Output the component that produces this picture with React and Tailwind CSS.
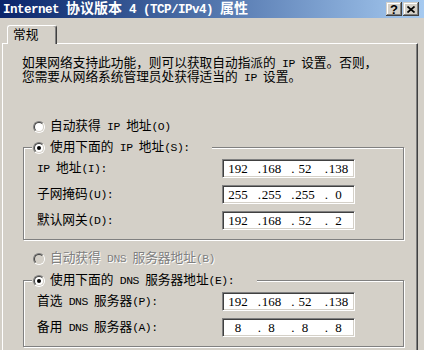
import React from 'react';

const FONT = "font-['Liberation_Serif','Noto_Sans_CJK_SC',serif]";

// Latin runs use a mono face squeezed to half a CJK cell per char, the way SimSun sets them
const T = ({ children }) =>
  String(children)
    .split(/([\x20-\x7e]+)/)
    .filter(Boolean)
    .map((run, i) =>
      /^[\x20-\x7e]+$/.test(run) ? (
        <span
          key={i}
          className="font-['Liberation_Mono','Noto_Sans_CJK_SC',monospace] text-[0.9em] tracking-[-0.0444em] whitespace-pre"
        >
          {run}
        </span>
      ) : (
        <span key={i}>{run}</span>
      )
    );

const Radio = ({ checked, disabled }) => (
  <span className="flex h-[12px] w-[12px] shrink-0 rounded-full border border-t-[#808080] border-l-[#808080] border-r-white border-b-white">
    <span
      className={`flex h-full w-full items-center justify-center rounded-full border border-t-[#404040] border-l-[#404040] border-r-[#d4d0c8] border-b-[#d4d0c8] ${
        disabled ? 'bg-[#d4d0c8]' : 'bg-white'
      }`}
    >
      {checked && <span className="h-[4px] w-[4px] rounded-full bg-black" />}
    </span>
  </span>
);

const IpBox = ({ value }) => {
  const [first, ...rest] = value;
  return (
    <div className="flex h-[19px] w-[133px] items-center border border-t-[#808080] border-l-[#808080] border-r-white border-b-white bg-white pl-[4.5px] text-[13px] leading-none shadow-[inset_1px_1px_0_#404040,inset_-1px_-1px_0_#d4d0c8]">
      <span className="w-[21px] text-center">{first}</span>
      {rest.map((part, i) => (
        <React.Fragment key={i}>
          <span className="w-[12.5px] text-right">.</span>
          <span className="w-[21px] text-center">{part}</span>
        </React.Fragment>
      ))}
    </div>
  );
};

const Group = ({ legendClass, label, rows }) => (
  <div className="mr-[13px] ml-[20px] border border-[#808080] shadow-[inset_1px_1px_0_#fff,1px_1px_0_#fff]">
    <div className={`-mt-[8px] ml-[8px] flex h-[16px] items-center gap-[5px] bg-[#d4d0c8] pl-[1px] ${legendClass}`}>
      <Radio checked />
      <span className="whitespace-nowrap">
        <T>{label}</T>
      </span>
    </div>
    <div className="mt-[3px] flex flex-col gap-[7px] pb-[9px]">
      {rows.map((row) => (
        <div key={row.label} className="flex h-[19px] items-center">
          <span className="w-[198px] pl-[13px] whitespace-nowrap">
            <T>{row.label}</T>
          </span>
          <IpBox value={row.value} />
        </div>
      ))}
    </div>
  </div>
);

const TitleButton = ({ children }) => (
  <div className="flex h-[14px] w-[16px] items-center justify-center bg-[#d4d0c8] shadow-[inset_-1px_-1px_0_#404040,inset_1px_1px_0_#d4d0c8,inset_-2px_-2px_0_#808080,inset_2px_2px_0_#fff]">
    {children}
  </div>
);

export default function App() {
  return (
    <div className={`flex h-[350px] w-[424px] flex-col overflow-hidden bg-[#d4d0c8] text-[12.7px] text-black ${FONT}`}>
      {/* title bar */}
      <div className="flex h-[18px] shrink-0 items-center bg-linear-to-r from-[#0a246a] to-[#a6caf0] pr-[5px] pl-[3px]">
        <span className="text-[14px] leading-none font-bold whitespace-nowrap text-white">
          <T>Internet 协议版本 4 (TCP/IPv4) 属性</T>
        </span>
        <div className="ml-auto flex gap-[1px]">
          <TitleButton>
            <span className="font-['Liberation_Sans',sans-serif] text-[13px] leading-none font-bold">?</span>
          </TitleButton>
          <TitleButton>
            <svg width="8" height="7" viewBox="0 0 8 7">
              <path d="M0.5 0.5 L7.5 6.5 M7.5 0.5 L0.5 6.5" stroke="#000" strokeWidth="1.7" />
            </svg>
          </TitleButton>
        </div>
      </div>

      {/* tabs */}
      <div className="flex shrink-0 pt-[7px] pl-[7px]">
        <div className="relative z-10 flex h-[19px] w-[50px] items-center rounded-t-[3px] border-t border-l border-white border-r border-r-[#404040] bg-[#d4d0c8] pt-[2px] pl-[5px] shadow-[inset_-1px_0_0_#808080]">
          常规
        </div>
      </div>

      {/* panel */}
      <div className="-mt-[1px] ml-[2px] flex w-[416px] flex-1 flex-col border-t border-l border-white border-r border-r-[#404040] shadow-[inset_-1px_0_0_#808080]">
        <p className="mt-[13px] pl-[19px] leading-[12.5px] whitespace-nowrap">
          <T>如果网络支持此功能，则可以获取自动指派的 IP 设置。否则，</T>
          <br />
          <T>您需要从网络系统管理员处获得适当的 IP 设置。</T>
        </p>

        <div className="mt-[35px] flex h-[16px] items-center gap-[5px] pl-[30px]">
          <Radio />
          <span className="whitespace-nowrap">
            <T>自动获得 IP 地址(O)</T>
          </span>
        </div>

        <div className="mt-[12px]">
          <Group
            legendClass="w-[180px]"
            label="使用下面的 IP 地址(S):"
            rows={[
              { label: 'IP 地址(I):', value: ['192', '168', '52', '138'] },
              { label: '子网掩码(U):', value: ['255', '255', '255', '0'] },
              { label: '默认网关(D):', value: ['192', '168', '52', '2'] },
            ]}
          />
        </div>

        <div className="mt-[11px] flex h-[16px] items-center gap-[5px] pl-[30px]">
          <Radio disabled />
          <span className="whitespace-nowrap text-[#808080] [text-shadow:1px_1px_0_#fff]">
            <T>自动获得 DNS 服务器地址(B)</T>
          </span>
        </div>

        <div className="mt-[13px]">
          <Group
            legendClass="w-[225px]"
            label="使用下面的 DNS 服务器地址(E):"
            rows={[
              { label: '首选 DNS 服务器(P):', value: ['192', '168', '52', '138'] },
              { label: '备用 DNS 服务器(A):', value: ['8', '8', '8', '8'] },
            ]}
          />
        </div>
      </div>
    </div>
  );
}
